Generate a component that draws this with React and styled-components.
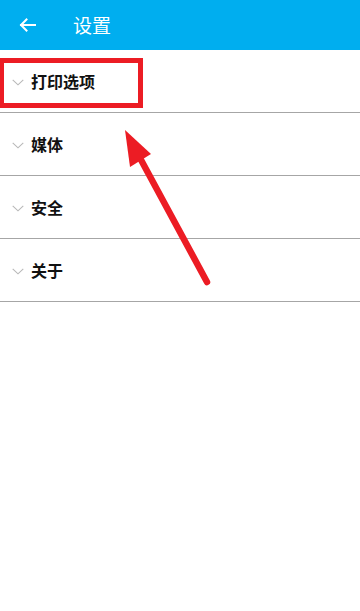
import React from "react";
import styled, { createGlobalStyle } from "styled-components";

const Global = createGlobalStyle`
  html, body {
    margin: 0;
    padding: 0;
    background: #ffffff;
    font-family: "Noto Sans CJK SC", "Noto Sans", sans-serif;
  }
`;

const Page = styled.div`
  position: relative;
  width: 360px;
  height: 611px;
  background: #ffffff;
  overflow: hidden;
`;

const Toolbar = styled.header`
  height: 50px;
  background: #00aeef;
  display: flex;
  align-items: center;
  padding-left: 19px;
  gap: 37px;
  color: #ffffff;
`;

const BackButton = styled.button`
  border: none;
  background: none;
  padding: 0;
  display: flex;
  align-items: center;
  cursor: pointer;
`;

const Title = styled.h1`
  margin: 0;
  font-size: 19px;
  font-weight: 400;
  line-height: 1;
  padding-bottom: 2px;
`;

const List = styled.ul`
  list-style: none;
  margin: 0;
  padding: 0;
`;

const Row = styled.li`
  height: 62px;
  display: flex;
  align-items: center;
  gap: 7px;
  padding-left: 12px;
  border-bottom: 1px solid #a6a6a6;
  font-size: 16px;
  font-weight: 700;
  color: #111111;
`;

const Chevron = styled.svg`
  width: 12px;
  height: 7px;
  margin-top: 2px;
  flex-shrink: 0;
`;

const Highlight = styled.div`
  position: absolute;
  left: -1px;
  top: 58px;
  width: 134px;
  height: 40px;
  border: 5px solid #ec1c24;
`;

const Pointer = styled.svg`
  position: absolute;
  left: 0;
  top: 0;
  pointer-events: none;
`;

const items = ["打印选项", "媒体", "安全", "关于"];

const App = () => {
  return (
    <Page>
      <Global />
      <Toolbar>
        <BackButton aria-label="返回">
          <svg width="17" height="14" viewBox="0 0 17 14">
            <path
              d="M16 7H2M7.5 1.5L2 7l5.5 5.5"
              fill="none"
              stroke="#ffffff"
              strokeWidth="2"
              strokeLinecap="square"
            />
          </svg>
        </BackButton>
        <Title>设置</Title>
      </Toolbar>
      <List>
        {items.map((label) => (
          <Row key={label}>
            <Chevron viewBox="0 0 12 7">
              <path d="M0.7 0.8L6 5.8l5.3-5" fill="none" stroke="#b8b8b8" strokeWidth="1.1" />
            </Chevron>
            {label}
          </Row>
        ))}
      </List>
      <Highlight />
      <Pointer width="360" height="611" viewBox="0 0 360 611">
        <line x1="207" y1="282" x2="140" y2="158" stroke="#ec1c24" strokeWidth="6.5" strokeLinecap="round" />
        <polygon points="125,130 151,154 130,167" fill="#ec1c24" />
      </Pointer>
    </Page>
  );
};

export default App;
